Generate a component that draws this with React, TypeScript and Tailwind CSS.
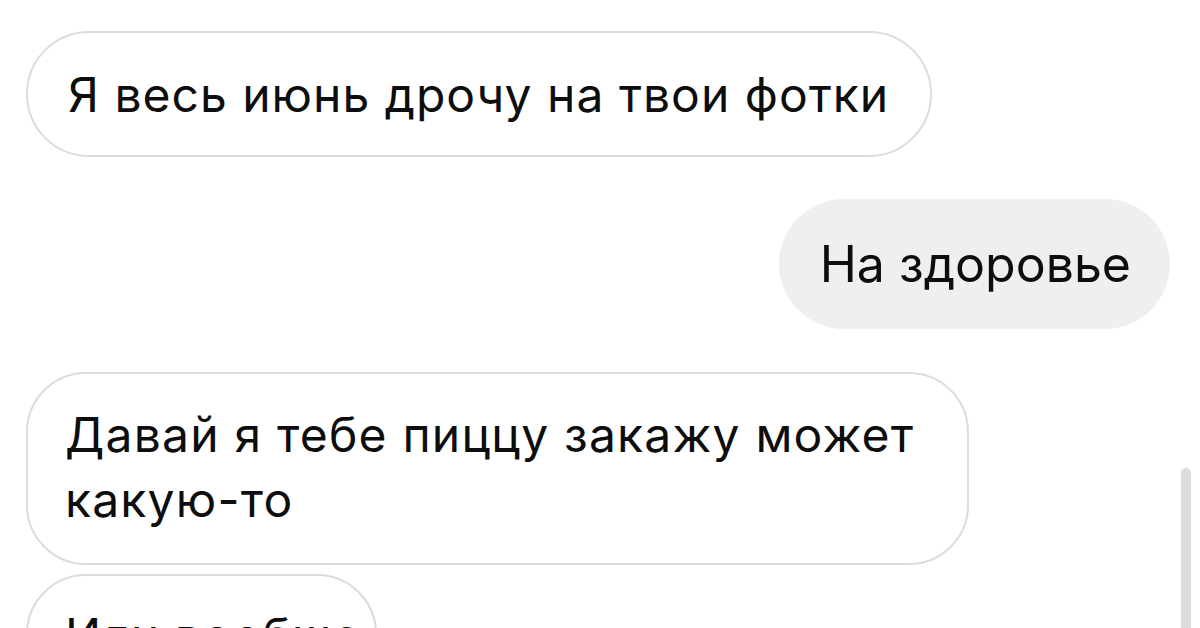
import React from "react";

export default function App() {
  return (
    <div
      className="relative w-[1200px] h-[628px] overflow-hidden bg-white text-black"
      style={{ fontFamily: "Inter, Roboto, 'Noto Sans', sans-serif" }}
    >
      <div className="flex flex-col pt-[31px]">
        <div className="self-start ml-[26px] h-[126px] flex items-center rounded-full border-2 border-[#dcdcdc] pl-[40px] pr-[41px] text-[48px] leading-[65px] tracking-[1px] text-[#0d0d0d]">
          Я весь июнь дрочу на твои фотки
        </div>
        <div className="self-end mr-[30px] mt-[42px] h-[130px] flex items-center rounded-full bg-[#efefef] pl-[41px] pr-[39px] text-[50px] leading-[65px] text-[#0d0d0d]">
          На здоровье
        </div>
        <div className="self-start ml-[26px] mt-[43px] w-[943px] h-[193px] rounded-[60px] border-2 border-[#dcdcdc] pl-[37px] pr-[30px] pt-[28px] text-[48px] leading-[65px] tracking-[1.2px] text-[#0d0d0d]">
          Давай я тебе пиццу закажу может какую-то
        </div>
        <div className="self-start ml-[26px] mt-[9px] w-[351px] h-[120px] rounded-[60px] border-2 border-[#dcdcdc] pl-[37px] pt-[27px] text-[48px] leading-[65px] tracking-[1px] text-[#0d0d0d] whitespace-nowrap">
          Или вообще
        </div>
      </div>
      <div className="absolute left-[1181px] top-[468px] w-[10px] h-[170px] rounded-t-full bg-[#dcdcdc]" />
    </div>
  );
}
